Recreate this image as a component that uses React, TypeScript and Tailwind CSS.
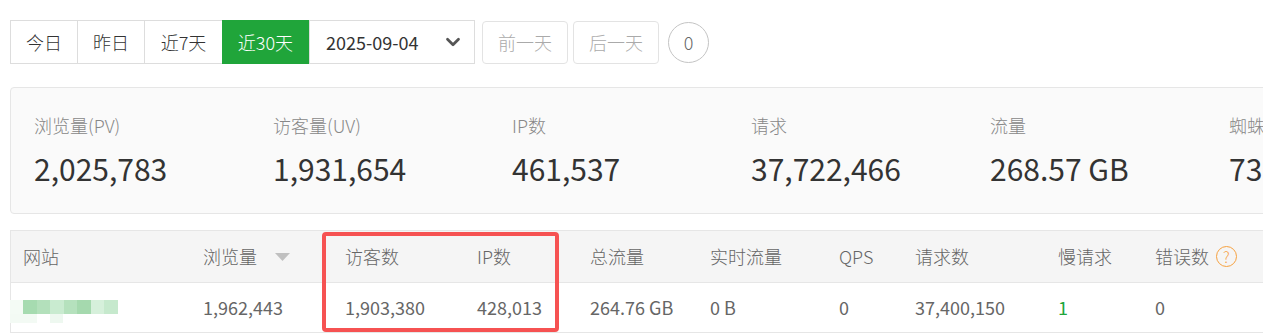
import { ChevronDown } from 'lucide-react';

const FONT = { fontFamily: '"Noto Sans CJK SC", "Noto Sans", sans-serif' };

const stats = [
  { label: '浏览量(PV)', value: '2,025,783' },
  { label: '访客量(UV)', value: '1,931,654' },
  { label: 'IP数', value: '461,537' },
  { label: '请求', value: '37,722,466' },
  { label: '流量', value: '268.57 GB' },
  { label: '蜘蛛', value: '73' },
];

const cols = 'grid grid-cols-[180px_142px_132px_113px_120px_129px_76px_143px_97px_1fr]';

// pixelated (blurred) site name
const blocks = ['bg-[#a6dbb0]', 'bg-[#b3e0bb]', 'bg-[#c9ebd0]', 'bg-[#b5e1bd]', 'bg-[#a5d9ae]', 'bg-[#d6f0db]', 'bg-[#c6e9cd]'];

function SiteName() {
  return (
    <div className="flex flex-col -ml-[13px]">
      <div className="flex h-[14px]">
        <div className="w-[13px] bg-[#f4fbf5]" />
        {blocks.map((b, i) => (
          <div key={i} className={`w-[13.5px] ${b}`} />
        ))}
      </div>
      <div className="flex h-[9px]">
        <div className="w-[27px] bg-[#f3faf4]" />
        <div className="w-[13px]" />
        <div className="w-[13px] bg-[#eef8f0]" />
      </div>
    </div>
  );
}

export default function App() {
  return (
    <div className="w-[1263px] h-[336px] overflow-hidden bg-white pt-[20px] pl-[10px] font-light" style={FONT}>
      {/* Date filter */}
      <div className="flex items-center">
        <div className="flex h-[44px] border border-[#dddddd] text-[18px] text-[#333]">
          <button className="w-[66px] flex items-center justify-center">今日</button>
          <button className="w-[67px] flex items-center justify-center border-l border-[#dddddd]">昨日</button>
          <button className="w-[78px] flex items-center justify-center border-l border-[#dddddd]">近7天</button>
          <button className="w-[87px] -my-px flex items-center justify-center bg-[#20a53a] text-white">近30天</button>
          <div className="w-[165px] flex items-center pl-[16px] pr-[10px] border-l border-[#dddddd]">
            <span className="font-normal">2025-09-04</span>
            <ChevronDown size={22} strokeWidth={3} className="ml-auto text-[#555]" />
          </div>
        </div>
        <button className="ml-[7px] w-[86px] h-[43px] rounded-[4px] border border-[#e3e3e3] text-[18px] text-[#aaa]">前一天</button>
        <button className="ml-[5px] w-[86px] h-[43px] rounded-[4px] border border-[#e3e3e3] text-[18px] text-[#aaa]">后一天</button>
        <div className="ml-[9px] w-[41px] h-[41px] rounded-full border-[1.5px] border-[#c4c4c4] flex items-center justify-center text-[18px] text-[#666]">0</div>
      </div>

      {/* Overview stats */}
      <div className="mt-[23px] w-[1500px] h-[127px] rounded-[4px] border border-[#e6e6e6] bg-[#fafafa] pl-[23px] pt-[25px] flex">
        {stats.map(s => (
          <div key={s.label} className="w-[239px] shrink-0">
            <div className="text-[18px] leading-[24px] text-[#888]">{s.label}</div>
            <div className="mt-[11px] text-[30px] leading-[40px] text-[#333] font-normal">{s.value}</div>
          </div>
        ))}
      </div>

      {/* Site table */}
      <div className="relative mt-[16px] w-[1500px] border-l border-[#e6e6e6] text-[18px] text-[#666]">
        <div className={`${cols} h-[53px] items-center bg-[#f5f5f5] border-y border-[#e6e6e6] pl-[12px]`}>
          <div>网站</div>
          <div className="flex items-center">
            浏览量
            <svg width="15" height="8" viewBox="0 0 15 8" className="ml-[18px]">
              <polygon points="0,0 15,0 7.5,8" fill="#c0c0c0" />
            </svg>
          </div>
          <div>访客数</div>
          <div>IP数</div>
          <div>总流量</div>
          <div>实时流量</div>
          <div>QPS</div>
          <div>请求数</div>
          <div>慢请求</div>
          <div className="flex items-center">
            错误数
            <span className="ml-[7px] w-[21px] h-[21px] rounded-full border-[1.5px] border-[#f5a13f] text-[#f5a13f] text-[15px] leading-none flex items-center justify-center">?</span>
          </div>
        </div>
        <div className={`${cols} h-[50px] items-center border-b border-[#e6e6e6] pl-[12px] font-normal`}>
          <div className="pt-[8px]">
            <SiteName />
          </div>
          <div>1,962,443</div>
          <div>1,903,380</div>
          <div>428,013</div>
          <div>264.76 GB</div>
          <div>0 B</div>
          <div>0</div>
          <div>37,400,150</div>
          <div className="text-[#20a53a]">1</div>
          <div>0</div>
        </div>

        {/* highlight */}
        <div className="absolute left-[311px] top-[2px] w-[237px] h-[100px] rounded-[4px] border-[4px] border-[#f65252]" />
      </div>
    </div>
  );
}
